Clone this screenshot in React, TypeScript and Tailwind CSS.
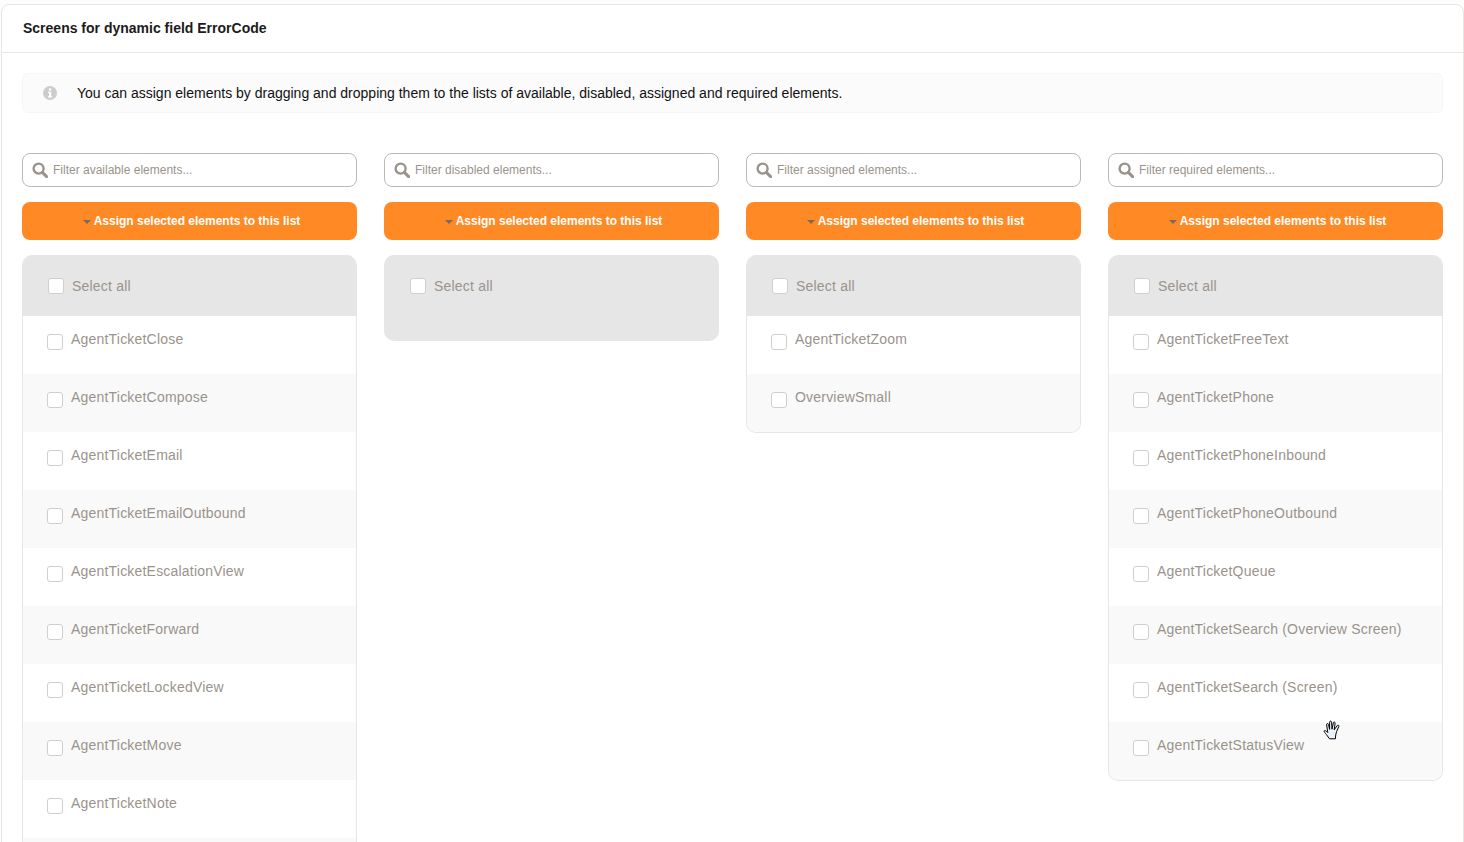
const columns = [
  {
    placeholder: "Filter available elements...",
    items: [
      "AgentTicketClose",
      "AgentTicketCompose",
      "AgentTicketEmail",
      "AgentTicketEmailOutbound",
      "AgentTicketEscalationView",
      "AgentTicketForward",
      "AgentTicketLockedView",
      "AgentTicketMove",
      "AgentTicketNote",
      "",
    ],
  },
  { placeholder: "Filter disabled elements...", items: [] },
  { placeholder: "Filter assigned elements...", items: ["AgentTicketZoom", "OverviewSmall"] },
  {
    placeholder: "Filter required elements...",
    items: [
      "AgentTicketFreeText",
      "AgentTicketPhone",
      "AgentTicketPhoneInbound",
      "AgentTicketPhoneOutbound",
      "AgentTicketQueue",
      "AgentTicketSearch (Overview Screen)",
      "AgentTicketSearch (Screen)",
      "AgentTicketStatusView",
    ],
  },
];

function SearchIcon() {
  return (
    <svg viewBox="0 0 16 16" className="h-[16px] w-[16px] shrink-0" fill="none" stroke="#9a938c" strokeWidth="2.4">
      <circle cx="6.6" cy="6.6" r="5" />
      <path d="M10.6 10.6 L14.6 14.6" strokeLinecap="round" strokeWidth="3" />
    </svg>
  );
}

function InfoIcon() {
  return (
    <svg viewBox="0 0 14 14" className="h-[14px] w-[14px] shrink-0">
      <circle cx="7" cy="7" r="7" fill="#cccccc" />
      <rect x="5.9" y="2.4" width="2.3" height="2.2" fill="#ffffff" />
      <path d="M5 5.7 H8.2 V10.2 H9.2 V11.5 H5 V10.2 H6 V7 H5 Z" fill="#ffffff" />
    </svg>
  );
}

function HandCursor() {
  return (
    <svg viewBox="0 0 18 20" className="absolute left-[1323px] top-[720px] h-[20px] w-[18px]" fill="#eaf2fb" stroke="#000000" strokeWidth="1" strokeLinejoin="round">
      <path d="M6.5 18.8 L3.4 14.6 C2.6 13.5 0.6 11.6 1.2 10.8 C1.9 10 3.4 11 4.8 12.6 L3.6 4.8 C3.4 3.4 5.2 3 5.5 4.4 L6.6 9.4 L6.6 2.2 C6.6 0.7 8.5 0.7 8.6 2.2 L9 9.2 L10.3 2.9 C10.6 1.5 12.4 1.9 12.1 3.3 L11.2 9.8 L14.2 5.6 C15 4.6 16.4 5.4 15.8 6.6 L13.6 11.6 C12.8 13.4 12.9 15 12.6 16 L12.4 18.8 Z" />
    </svg>
  );
}

function Checkbox({ className }: { className: string }) {
  return <span className={`block h-[16px] w-[16px] shrink-0 rounded-[3px] border border-[#cfcfcf] bg-white ${className}`} />;
}

function ListColumn({ placeholder, items }: { placeholder: string; items: string[] }) {
  return (
    <div className="w-[335px] shrink-0">
      <div className="flex h-[34px] items-center rounded-[8px] border border-[#bdb9b3] bg-white pl-[9px]">
        <SearchIcon />
        <span className="ml-[5px] text-[12px] text-[#9a938c]">{placeholder}</span>
      </div>
      <button className="mt-[15px] flex h-[38px] w-full items-center justify-center rounded-[8px] bg-[#ff8a25] pl-[4px] text-[12px] font-bold text-white">
        <span className="mr-[3px] mt-[1px] h-0 w-0 border-x-[4px] border-t-[4px] border-x-transparent border-t-[#7a6a5c]" />
        Assign selected elements to this list
      </button>
      <div className={`mt-[15px] overflow-hidden rounded-[10px] ${items.length ? "border border-t-0 border-[#e8e6e1]" : ""}`}>
        <div className={`flex items-start bg-[#e6e6e6] pt-[23px] ${items.length ? "-mx-px h-[61px] pl-[26px]" : "h-[86px] pl-[26px]"}`}>
          <Checkbox className="" />
          <span className="ml-[8px] text-[14px] leading-[16px] tracking-[0.2px] text-[#9a938c]">Select all</span>
        </div>
        {items.map((item, i) => (
          <div key={item || i} className={`flex h-[58px] items-start pl-[24px] pt-[15px] ${i % 2 ? "bg-[#f9f9f9]" : "bg-white"}`}>
            {item && <Checkbox className="mt-[3px]" />}
            {item && <span className="ml-[8px] text-[14px] leading-[16px] tracking-[0.2px] text-[#9a938c]">{item}</span>}
          </div>
        ))}
      </div>
    </div>
  );
}

export default function App() {
  return (
    <div className="relative h-screen overflow-hidden bg-[#fdfdfd] pl-px pt-[4px] font-['Liberation_Sans',Arial,sans-serif]">
      <div className="min-h-[900px] rounded-[8px] border border-[#e8e6e1] bg-white">
        <div className="flex h-[48px] items-center border-b border-[#e8e6e1] pl-[21px]">
          <h1 className="text-[14px] font-bold text-[#1b1b1b]">Screens for dynamic field ErrorCode</h1>
        </div>
        <div className="px-[20px] pt-[20px]">
          <div className="flex h-[40px] items-center rounded-[6px] border border-[#f6f6f6] bg-[#fbfbfb] pl-[20px]">
            <InfoIcon />
            <p className="ml-[20px] text-[14px] text-[#111111]">
              You can assign elements by dragging and dropping them to the lists of available, disabled, assigned and required elements.
            </p>
          </div>
          <div className="mt-[40px] flex items-start gap-[27px]">
            {columns.map((col) => (
              <ListColumn key={col.placeholder} placeholder={col.placeholder} items={col.items} />
            ))}
          </div>
        </div>
      </div>
      <HandCursor />
    </div>
  );
}
